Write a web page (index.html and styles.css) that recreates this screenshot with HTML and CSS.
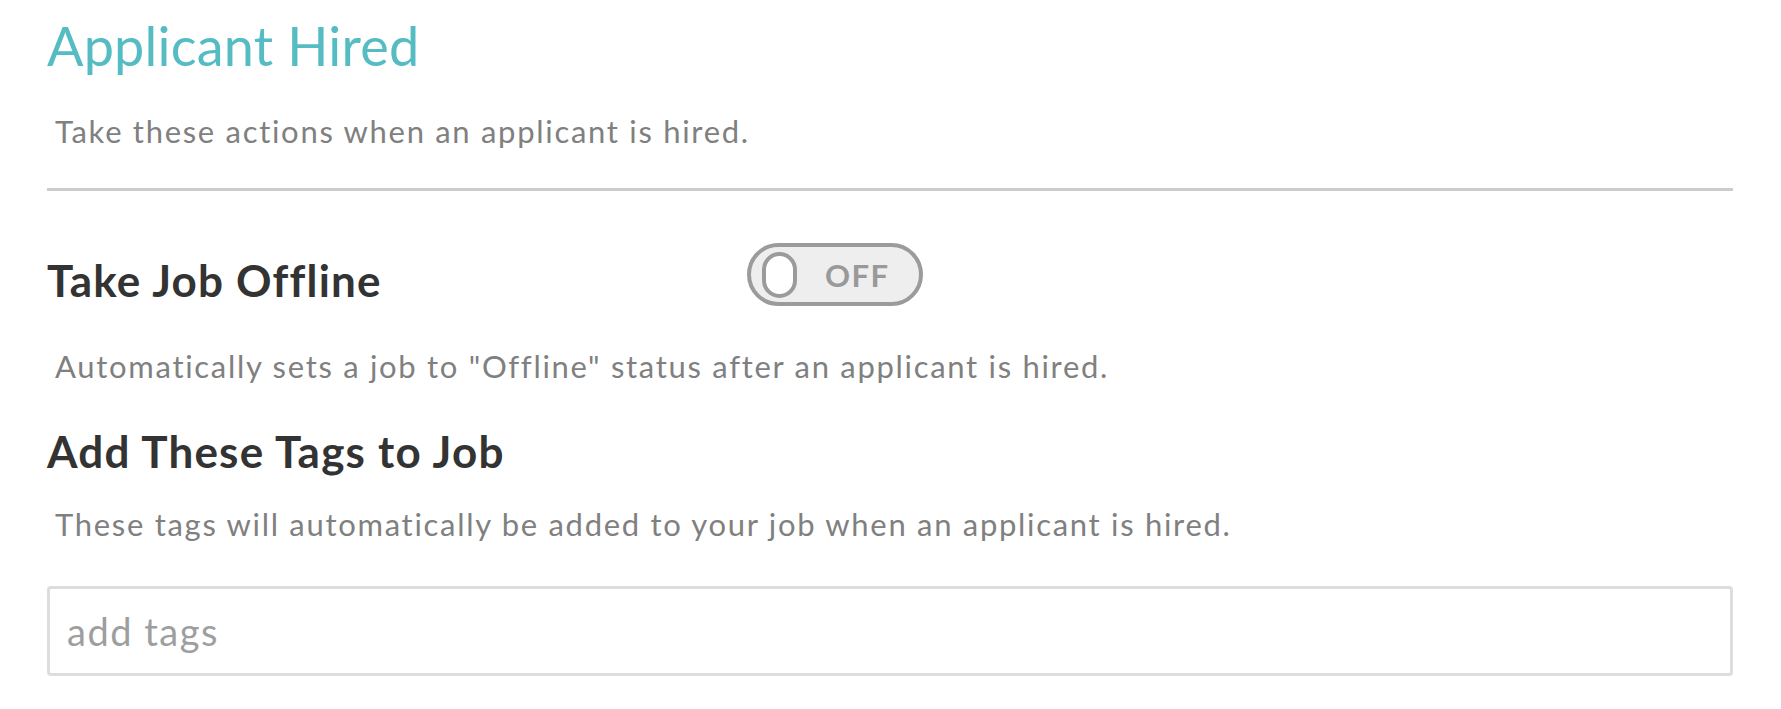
FILE: index.html
```html
<!DOCTYPE html>
<html lang="en">
<head>
<meta charset="utf-8">
<title>Applicant Hired</title>
<link rel="stylesheet" href="styles.css">
</head>
<body>
<main class="panel">
  <h1 class="panel-title">Applicant Hired</h1>
  <p class="panel-desc">Take these actions when an applicant is hired.</p>
  <hr class="divider">

  <section class="setting setting-offline">
    <div class="setting-row">
      <h2 class="setting-title">Take Job Offline</h2>
      <div class="toggle" role="switch" aria-checked="false">
        <span class="toggle-knob"></span>
        <span class="toggle-label">OFF</span>
      </div>
    </div>
    <p class="setting-desc">Automatically sets a job to "Offline" status after an applicant is hired.</p>
  </section>

  <section class="setting setting-tags">
    <h2 class="setting-title">Add These Tags to Job</h2>
    <p class="setting-desc">These tags will automatically be added to your job when an applicant is hired.</p>
    <div class="tag-input">
      <input class="tag-field" type="text" placeholder="add tags">
    </div>
  </section>
</main>
</body>
</html>
```

FILE: styles.css
```css
* { box-sizing: border-box; }

html, body {
  margin: 0;
  padding: 0;
  background: #ffffff;
}

body {
  font-family: Lato, "Open Sans", Arial, sans-serif;
}

.panel {
  padding: 0 48px 0 47px;
}

.panel-title {
  margin: 0;
  padding-top: 14px;
  font-size: 54px;
  line-height: 64px;
  font-weight: 400;
  letter-spacing: 0.2px;
  color: #56bcc4;
}

.panel-desc {
  margin: 0;
  padding: 35px 0 0 8px;
  font-size: 31px;
  line-height: 36px;
  letter-spacing: 1.7px;
  color: #808080;
}

.divider {
  margin: 39px 0 0;
  border: 0;
  height: 3px;
  background: #cccccc;
}

.setting-row {
  display: flex;
  align-items: flex-start;
  margin-top: 52px;
}

.setting-title {
  margin: 0;
  font-size: 44px;
  line-height: 52px;
  font-weight: 700;
  letter-spacing: 1.2px;
  color: #333333;
}

.setting-row .setting-title {
  width: 700px;
  margin-top: 11px;
}

.toggle {
  display: flex;
  align-items: center;
  flex: none;
  width: 176px;
  height: 63px;
  padding-left: 11px;
  border: 4px solid #9b9b9b;
  border-radius: 32px;
  background: #eeeeee;
}

.toggle-knob {
  width: 35px;
  height: 46px;
  border: 4px solid #9b9b9b;
  border-radius: 18px;
  background: #ffffff;
}

.toggle-label {
  margin-left: 28px;
  font-size: 31px;
  line-height: 36px;
  font-weight: 700;
  letter-spacing: 1.5px;
  color: #999999;
}

.setting-desc {
  margin: 0;
  padding-left: 8px;
  font-size: 31px;
  line-height: 36px;
  letter-spacing: 1.7px;
  color: #808080;
}

.setting-offline .setting-desc {
  margin-top: 42px;
}

.setting-tags {
  margin-top: 41px;
}

.setting-tags .setting-desc {
  margin-top: 29px;
}

.tag-input {
  margin-top: 44px;
  height: 90px;
  border: 3px solid #dddddd;
  border-radius: 4px;
  display: flex;
  align-items: center;
}

.tag-field {
  width: 100%;
  border: 0;
  outline: none;
  background: transparent;
  padding: 0 0 0 17px;
  font-family: Lato, "Open Sans", Arial, sans-serif;
  font-size: 38px;
  line-height: 46px;
  letter-spacing: 1.5px;
  color: #555555;
}

.tag-field::placeholder {
  color: #9e9e9e;
}
```
